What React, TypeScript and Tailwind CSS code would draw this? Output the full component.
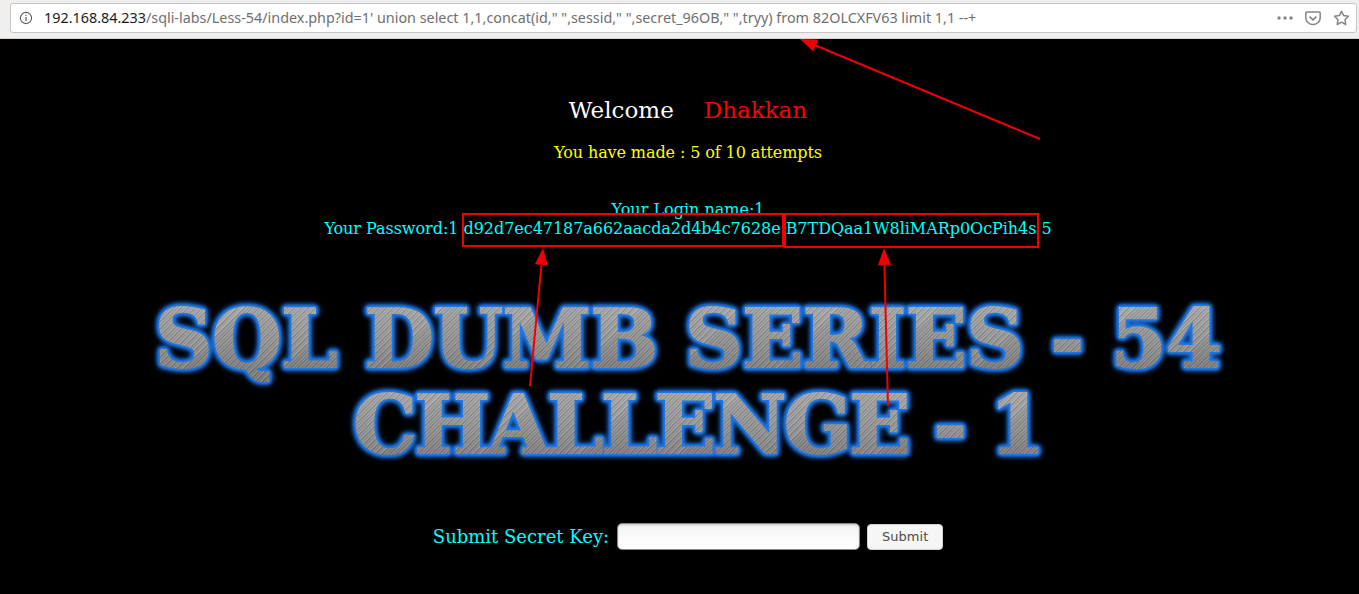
function Arrow({ x1, y1, x2, y2 }: { x1: number; y1: number; x2: number; y2: number }) {
  const a = Math.atan2(y2 - y1, x2 - x1);
  const L = 17;
  const W = 6.5;
  const bx = x2 - L * Math.cos(a);
  const by = y2 - L * Math.sin(a);
  const nx = -Math.sin(a) * W;
  const ny = Math.cos(a) * W;
  return (
    <g>
      <line x1={x1} y1={y1} x2={bx} y2={by} stroke="#f00000" strokeWidth="2" />
      <polygon points={`${x2},${y2} ${bx + nx},${by + ny} ${bx - nx},${by - ny}`} fill="#f00000" />
    </g>
  );
}

const titleClass =
  "font-['DejaVu_Serif',serif] font-bold text-[80px] leading-[86px] whitespace-nowrap text-transparent [-webkit-text-stroke:2px_transparent] bg-clip-text bg-[repeating-linear-gradient(135deg,rgba(255,255,255,0.22)_0px,rgba(255,255,255,0)_1px,rgba(0,0,0,0.18)_2px,rgba(255,255,255,0.1)_3px,rgba(0,0,0,0.12)_5px),linear-gradient(#b0b0b0,#959595_55%,#767676)] [filter:drop-shadow(0_0_1px_#1f78e6)_drop-shadow(0_0_1px_#1f78e6)_drop-shadow(0_0_1px_#1f78e6)_drop-shadow(0_0_2px_#1f78e6)_drop-shadow(0_0_2px_#1a66c8)]";

export default function App() {
  return (
    <div className="relative w-[1359px] h-[594px] overflow-hidden bg-black font-['DejaVu_Serif',serif]">
      <div className="h-[39px] bg-[#f0efee] border-b border-[#d2d2d2] pt-[3px] pl-[10px] pr-[2px]">
        <div className="h-[30px] bg-white border border-[#c6c6c6] rounded-[3px] flex items-center pl-[8px] pr-[6px] font-['Noto_Sans',sans-serif] text-[14.36px]">
          <svg width="14" height="14" viewBox="0 0 14 14" className="shrink-0 mr-[11px]" fill="none">
            <circle cx="7" cy="7" r="5.6" stroke="#5c5c5c" strokeWidth="1.1" />
            <rect x="6.4" y="6" width="1.2" height="4" fill="#5c5c5c" />
            <rect x="6.4" y="3.8" width="1.2" height="1.2" fill="#5c5c5c" />
          </svg>
          <span className="whitespace-nowrap text-[#6f6f6f]">
            <span className="text-[#1c1c1c]">192.168.84.233</span>
            /sqli-labs/Less-54/index.php?id=1' union select 1,1,concat(id," ",sessid," ",secret_96OB," ",tryy) from 82OLCXFV63 limit 1,1 --+
          </span>
          <div className="ml-auto flex items-center shrink-0">
            <svg width="16" height="4" viewBox="0 0 16 4" className="mr-[12px]" fill="#858585">
              <circle cx="2" cy="2" r="1.7" />
              <circle cx="8" cy="2" r="1.7" />
              <circle cx="14" cy="2" r="1.7" />
            </svg>
            <svg width="16" height="15" viewBox="0 0 16 15" className="mr-[12px]" fill="none" stroke="#858585" strokeWidth="1.5">
              <path d="M1.8 1h12.4a1 1 0 0 1 1 1v4.8c0 3.6-3.3 6.8-7.2 6.8S.8 10.400.8 6.800V2a1 1 0 0 1 1-1z" />
              <path d="M4.600 5.600 8 8.800l3.400-3.200" strokeWidth="1.7" />
            </svg>
            <svg width="17" height="16" viewBox="0 0 17 16" fill="none" stroke="#858585" strokeWidth="1.5" strokeLinejoin="round">
              <path d="M8.500 1.200 10.600 5.600l4.900.7-3.500 3.400.8 4.800-4.300-2.300-4.300 2.300.8-4.800L1.500 6.300l4.900-.7z" />
            </svg>
          </div>
        </div>
      </div>

      <div className="pl-[17px] flex flex-col items-center">
        <div className="mt-[56px] text-[23px] leading-[30px] flex">
          <span className="text-white">Welcome</span>
          <span className="text-[#ff0000] ml-[30px]">Dhakkan</span>
        </div>
        <div className="mt-[18px] text-[16px] leading-[19px] tracking-[-0.1px] text-[#ffff00]">You have made : 5 of 10 attempts</div>
        <div className="mt-[38px] text-[16px] leading-[19px] text-[#00ffff]">Your Login name:1</div>
        <div className="text-[16px] leading-[19px] tracking-[-0.04px] text-[#00ffff] whitespace-nowrap">
          Your Password:1 d92d7ec47187a662aacda2d4b4c7628e B7TDQaa1W8liMARp0OcPih4s 5
        </div>
        <div className="mt-[58px] flex flex-col items-center">
          <div className={`${titleClass} tracking-[-0.5px]`}>SQL DUMB SERIES - 54</div>
          <div className={`${titleClass} tracking-[-2.5px] ml-[20px]`}>CHALLENGE - 1</div>
        </div>
        <div className="mt-[55px] flex items-center">
          <span className="text-[18px] leading-[26px] text-[#00ffff] mr-[8px]">Submit Secret Key:</span>
          <div className="w-[243px] h-[27px] rounded-[5px] border border-[#8a8a8a] bg-[linear-gradient(#f4f4f4,#ffffff)] shadow-[inset_0_1px_2px_rgba(0,0,0,0.2)]" />
          <button className="ml-[7px] w-[76px] h-[26px] rounded-[4px] border border-[#d0d0d0] bg-[#f6f6f6] text-[13px] text-[#4c4c4c] font-['DejaVu_Sans',sans-serif]">
            Submit
          </button>
        </div>
      </div>

      <svg className="absolute inset-0 pointer-events-none" width="1359" height="594" fill="none">
        <rect x="463" y="214" width="320" height="32" stroke="#f00000" strokeWidth="2" />
        <rect x="785" y="214" width="253" height="33" stroke="#f00000" strokeWidth="2" />
        <Arrow x1={1040} y1={139} x2={800} y2={39} />
        <Arrow x1={530} y1={386} x2={543} y2={248} />
        <Arrow x1={888} y1={406} x2={884} y2={248} />
      </svg>
    </div>
  );
}
